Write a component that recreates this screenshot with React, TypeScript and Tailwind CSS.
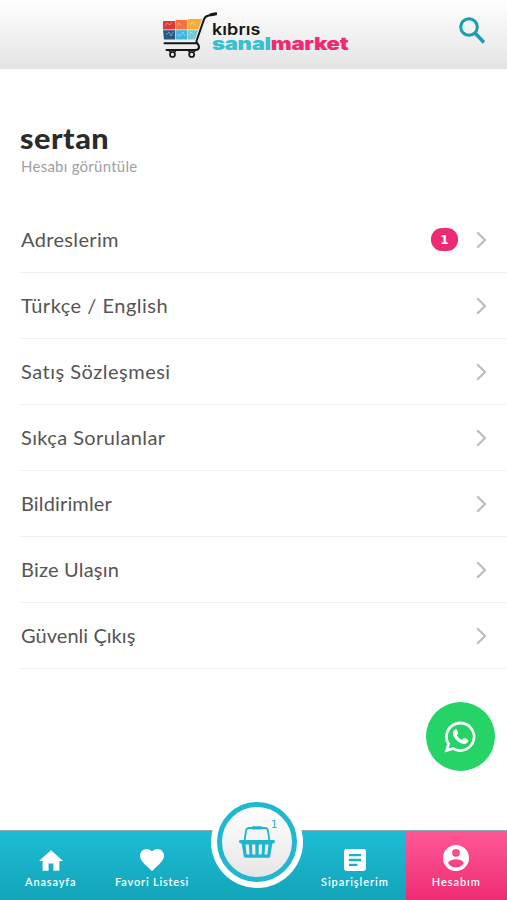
import type { ReactNode } from "react";

const menu = [
  { label: "Adreslerim", count: 1, spacing: "tracking-[0.35px]" },
  { label: "Türkçe / English", spacing: "tracking-[0.5px]" },
  { label: "Satış Sözleşmesi", spacing: "tracking-[0.5px]" },
  { label: "Sıkça Sorulanlar", spacing: "tracking-[0.4px]" },
  { label: "Bildirimler", spacing: "tracking-[0.15px]" },
  { label: "Bize Ulaşın", spacing: "tracking-[0.2px]" },
  { label: "Güvenli Çıkış", spacing: "tracking-[0.05px]" },
];

function CartLogo() {
  return (
    <svg viewBox="0 0 56 46" className="h-[46px] w-[56px] shrink-0" fill="none">
      <path d="M2 9h12v8.500H2z" fill="#d93a35" />
      <path d="M14.500 8H26v9.500H14.500z" fill="#f2713d" />
      <path d="M26.500 7H41l-3.500 10.500h-11z" fill="#f8ae35" />
      <path d="M2 18.200h12v9.300H3z" fill="#245b86" />
      <path d="M14.500 18.200H26v9.300H14.500z" fill="#42b6df" />
      <path d="M26.500 18.200h10.700L34 27.500h-7.500z" fill="#72c9cf" />
      <path
        d="M4 14l2-3 3 2 2-3M5 23l3-3 2 4 2-4M16 14l2-3 2 2M16 22l3 2 3-4 2 4M29 13l3-3 2 3M28 23l2-3 2 2"
        stroke="#fff"
        strokeOpacity=".45"
        strokeWidth=".8"
      />
      <path
        d="M53 2.200l-6 1.500c-2 .5-3.200 1.300-4 3.700L35.500 29c-.7 2.200 2.500 3 2.500 5.700 0 2-1.500 3.300-3.500 3.300H5.500M3.500 31.200h32"
        stroke="#161616"
        strokeWidth="2"
        strokeLinecap="round"
        strokeLinejoin="round"
      />
      <path d="M50 2.700l5-.9" stroke="#161616" strokeWidth="3" strokeLinecap="round" />
      <circle cx="11.500" cy="42.500" r="2.500" stroke="#161616" strokeWidth="1.700" />
      <circle cx="30.700" cy="42.500" r="2.500" stroke="#161616" strokeWidth="1.700" />
      <path d="M8 40q3.500-2.500 7 0M27.200 40q3.500-2.500 7 0" stroke="#161616" strokeWidth="1.200" />
    </svg>
  );
}

function BasketIcon() {
  return (
    <svg viewBox="0 0 40 36" className="h-9 w-10" fill="none">
      <path
        d="M7.500 17L9 7Q9.500 4 12 4h16q2.500 0 3 3l1.500 10"
        stroke="#1fb5cd"
        strokeWidth="1.800"
      />
      <path d="M16 3.800h8" stroke="#1fb5cd" strokeWidth="3.200" strokeLinecap="round" />
      <path
        fill="#1fb5cd"
        fillRule="evenodd"
        d="M3.500 16h33q1.500 0 1.500 1.400t-1.500 1.900l-1.200.5-2 12.500q-.3 1.500-1.800 1.500h-23Q7 33.800 6.700 32.300L4.700 19.800l-1.200-.5Q2 18.800 2 17.400T3.500 16zM8.500 20.500l1.200 10h2.800l-.7-10zM15 20.500l.4 10h3l-.1-10zM21.700 20.500v10h3l.4-10zM28.300 20.500l-.8 10h2.800l1.200-10z"
      />
    </svg>
  );
}

function Tab({ label, spacing, children, active }: { label: string; spacing: string; children: ReactNode; active?: boolean }) {
  return (
    <a
      className={`flex flex-col items-center pb-[11px] justify-end text-white ${
        active ? "bg-gradient-to-b from-[#ff5796] to-[#ee2a73]" : ""
      }`}>
      {children}
      <span className={`whitespace-nowrap text-[11px] font-semibold leading-[14px] ${spacing}`}>
        {label}
      </span>
    </a>
  );
}

export default function App() {
  return (
    <div className="relative flex h-[900px] w-[507px] flex-col overflow-hidden bg-white font-['Lato','Open_Sans',sans-serif]">
      <header className="flex h-[69px] shrink-0 justify-between bg-gradient-to-b from-white to-[#e4e4e4]">
        <div className="ml-[161px] flex pt-[12px]">
          <CartLogo />
          <div className="-ml-[5px] pt-[10px] font-['Inter',sans-serif]">
            <div className="origin-left scale-x-[1.12] text-[16px] font-semibold leading-[15px] tracking-[0.1px] text-[#171717]">
              kıbrıs
            </div>
            <div className="origin-left scale-x-[1.23] text-[18px] font-black leading-[14px] tracking-[-0.25px] text-[#ee2a73]">
              <span className="text-[#38bfd0]">sanal</span>market
            </div>
          </div>
        </div>
        <svg viewBox="0 0 26 27" className="mr-[22px] mt-[17px] h-[27px] w-[26px]" fill="none" stroke="#189eb1" strokeWidth="3">
          <circle cx="10" cy="10" r="8.300" />
          <path d="M16 16l9 9.500" strokeWidth="3.600" />
        </svg>
      </header>

      <main className="flex-1 pl-[20px]">
        <h1 className="mt-[51px] origin-left scale-x-[1.055] text-[29px] font-black leading-[36px] tracking-[0.5px] text-[#2b2b2b]">sertan</h1>
        <p className="pl-px text-[15px] leading-[20px] tracking-[0.25px] text-[#a0a0a0]">Hesabı görüntüle</p>
        <ul className="mt-[31px]">
          {menu.map((item) => (
            <li
              key={item.label}
              className="flex h-[66px] items-center border-b border-[#f0f0f0] pr-5 text-[20px] text-[#555]">
              <span className={`flex-1 pb-[2px] pl-px ${item.spacing}`}>{item.label}</span>
              {item.count && (
                <span className="mr-[18px] grid h-[23px] w-[27px] place-items-center rounded-[11px] bg-[#ee2a73] font-['DejaVu_Sans',sans-serif] text-[12px] font-bold text-white">
                  {item.count}
                </span>
              )}
              <svg viewBox="0 0 11 18" className="h-[18px] w-[11px]" fill="none" stroke="#bebebe" strokeWidth="2.200">
                <path d="M1.200 1.200L9 9l-7.800 7.800" />
              </svg>
            </li>
          ))}
        </ul>
      </main>

      <a className="absolute left-[426px] top-[702px] grid h-[69px] w-[69px] place-items-center rounded-full bg-[#25d366]">
        <svg viewBox="0 0 32 32" className="mr-px h-8 w-8" fill="#fff">
          <path
            fillRule="evenodd"
            d="M16.300.5a15.200 15.200 0 0 0-13.200 22.700L.5 31.500l8.500-2.400A15.200 15.200 0 1 0 16.300.5zm0 2.900a12.400 12.400 0 1 1-7 22.600l-4.700 1.300 1.400-4.500A12.400 12.400 0 0 1 16.300 3.400z"
          />
          <path d="M11 8.500c.5-.5 1.500-.5 1.800.1l1.300 3c.2.500.1.900-.2 1.300l-1 1.300c1 2.100 2.900 3.800 5.200 4.700l1.400-1.600c.3-.4.700-.5 1.200-.3l2.900 1.400c.5.300.7.500.6 1.100-.2 2.200-2.300 3.600-4.300 3.500-3-.2-6-2.200-8-4.500-1.700-1.900-3.100-4.200-3-6.500.1-1.500.9-2.800 2.100-3.500z" />
        </svg>
      </a>

      <nav className="grid h-[70px] shrink-0 grid-cols-5 border-t border-[#8eabb0] bg-gradient-to-b from-[#1dbdd6] to-[#13a4b9]">
        <Tab label="Anasayfa" spacing="tracking-[0.85px]">
          <svg viewBox="2 3 20 17" className="mb-[4px] h-[21px] w-[24px]" fill="currentColor">
            <path d="M10 20v-6h4v6h5v-8h3L12 3 2 12h3v8z" />
          </svg>
        </Tab>
        <Tab label="Favori Listesi" spacing="tracking-[0.8px]">
          <svg viewBox="2 3 20 18.350" className="mb-[4px] h-[22px] w-[24px]" fill="currentColor">
            <path d="M12 21.350l-1.450-1.320C5.400 15.360 2 12.280 2 8.500 2 5.420 4.420 3 7.500 3c1.740 0 3.410.81 4.500 2.090C13.090 3.810 14.760 3 16.500 3 19.580 3 22 5.420 22 8.500c0 3.780-3.400 6.860-8.550 11.540z" />
          </svg>
        </Tab>
        <span />
        <Tab label="Siparişlerim" spacing="tracking-[0.95px]">
          <svg viewBox="3 3 18 18" className="mb-[4px] h-[22px] w-[22px]" fill="currentColor">
            <path fillRule="evenodd" d="M19 3H5a2 2 0 0 0-2 2v14a2 2 0 0 0 2 2h14a2 2 0 0 0 2-2V5a2 2 0 0 0-2-2zM14 17H7v-2h7zm3-4H7v-2h10zm0-4H7V7h10z" />
          </svg>
        </Tab>
        <Tab label="Hesabım" spacing="tracking-[0.95px]" active>
          <svg viewBox="2 2 20 20" className="mb-[4px] h-[26px] w-[26px]" fill="currentColor">
            <path fillRule="evenodd" d="M12 2a10 10 0 1 0 0 20 10 10 0 0 0 0-20zm0 3a3 3 0 1 1 0 6 3 3 0 0 1 0-6zm0 14.200a7.200 7.200 0 0 1-6-3.220c.03-1.990 4-3.080 6-3.080s5.970 1.090 6 3.080a7.200 7.200 0 0 1-6 3.220z" />
          </svg>
        </Tab>
      </nav>

      {/* basket button overlapping the tab bar */}
      <a className="absolute left-[211px] top-[796px] grid h-[92px] w-[92px] place-items-center rounded-full bg-white">
        <span className="grid h-[80px] w-[80px] place-items-center rounded-full border-[5px] border-[#1fb8d0] bg-gradient-to-b from-white to-[#e6e6e6]">
          <BasketIcon />
        </span>
        <span className="absolute left-[60px] top-[22px] font-['DejaVu_Sans',sans-serif] text-[10px] leading-[14px] text-[#1fb5cd]">1</span>
      </a>
    </div>
  );
}
